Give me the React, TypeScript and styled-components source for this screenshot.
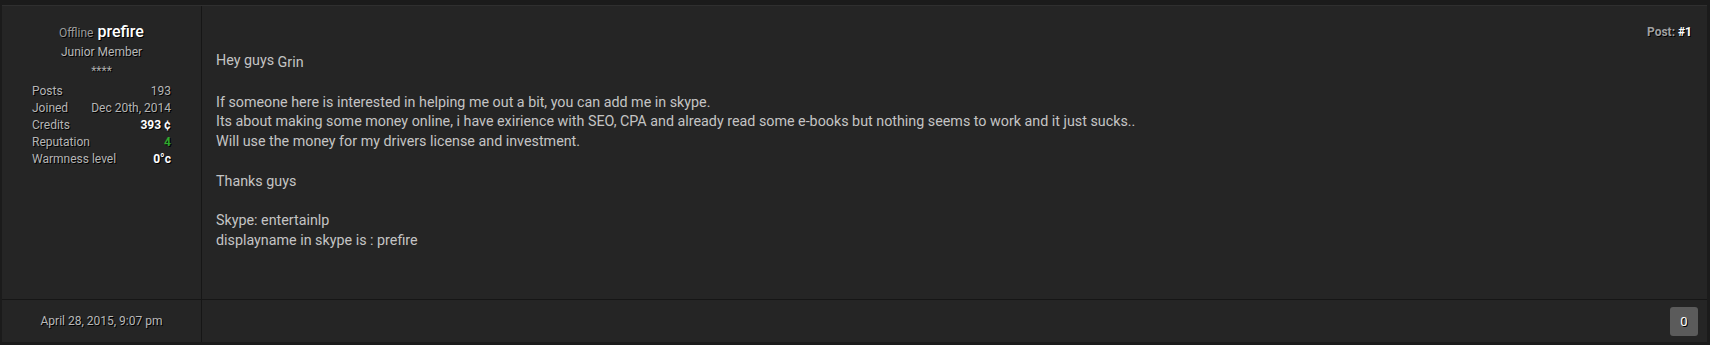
import React from "react";
import styled, { createGlobalStyle } from "styled-components";

const Global = createGlobalStyle`
  html, body { margin: 0; padding: 0; background: #1b1b1b; }
  body { font-family: Roboto, "Liberation Sans", Arial, sans-serif; }
`;

const Page = styled.div`
  padding: 5px 3px 2px 2px;
`;

const Post = styled.div`
  display: grid;
  grid-template-columns: 200px 1fr;
  grid-template-rows: 294px 42px;
  background: #252525;
  border-top: 1px solid #2f2f2f;
  box-sizing: border-box;
`;

const Sidebar = styled.div`
  border-right: 1px solid #161616;
  border-bottom: 1px solid #161616;
  padding: 16px 30px 0 30px;
  text-align: center;
  color: #b8b8b8;
  text-shadow: 1px 1px 0 #000;
`;

const NameLine = styled.div`
  line-height: 20px;
`;

const Status = styled.span`
  font-size: 12px;
  color: #9a9a9a;
`;

const Username = styled.span`
  font-size: 16px;
  font-weight: 500;
  color: #ffffff;
`;

const Rank = styled.div`
  font-size: 12px;
  line-height: 16px;
  margin-top: 1px;
`;

const Stars = styled.div`
  font-size: 12px;
  line-height: 16px;
  margin-top: 3px;
  color: #aaa;
`;

const Stats = styled.div`
  margin-top: 4px;
  display: flex;
  flex-direction: column;
`;

const StatRow = styled.div`
  display: flex;
  justify-content: space-between;
  font-size: 12px;
  line-height: 17px;
`;

const StatLabel = styled.span`
  color: #b5b5b5;
`;

const StatValue = styled.span<{ $tone?: "white" | "green" }>`
  color: ${(p) => (p.$tone === "white" ? "#ffffff" : p.$tone === "green" ? "#2fa82f" : "#b5b5b5")};
  font-weight: ${(p) => (p.$tone ? 700 : 400)};
`;

const Content = styled.div`
  border-bottom: 1px solid #161616;
  padding: 18px 15px 0 14px;
  display: flex;
  flex-direction: column;
`;

const PostNum = styled.div`
  align-self: flex-end;
  font-size: 12px;
  font-weight: 700;
  color: #a0a0a0;
  text-shadow: 1px 1px 0 #000;
  line-height: 16px;
`;

const Hash = styled.span`
  color: #ffffff;
`;

const Body = styled.div`
  margin-top: 11px;
  font-size: 14.3px;
  line-height: 19.75px;
  color: #c4c4c4;
`;

const Smiley = styled.span`
  display: inline-block;
  vertical-align: -2px;
`;

const FooterLeft = styled.div`
  border-right: 1px solid #161616;
  display: flex;
  align-items: center;
  justify-content: center;
  font-size: 12px;
  color: #b8b8b8;
  text-shadow: 1px 1px 0 #000;
`;

const FooterRight = styled.div`
  display: flex;
  align-items: center;
  justify-content: flex-end;
  padding-right: 9px;
`;

const Counter = styled.div`
  width: 28px;
  height: 29px;
  border-radius: 3px;
  background: #5b5b5b;
  color: #ffffff;
  font-size: 13px;
  display: flex;
  align-items: center;
  justify-content: center;
  text-shadow: 1px 1px 0 #000;
`;

const stats: { label: string; value: string; tone?: "white" | "green" }[] = [
  { label: "Posts", value: "193" },
  { label: "Joined", value: "Dec 20th, 2014" },
  { label: "Credits", value: "393 ¢", tone: "white" },
  { label: "Reputation", value: "4", tone: "green" },
  { label: "Warmness level", value: "0°c", tone: "white" },
];

export default function App() {
  return (
    <>
      <Global />
      <Page>
        <Post>
          <Sidebar>
            <NameLine>
              <Status>Offline</Status> <Username>prefire</Username>
            </NameLine>
            <Rank>Junior Member</Rank>
            <Stars>****</Stars>
            <Stats>
              {stats.map((s) => (
                <StatRow key={s.label}>
                  <StatLabel>{s.label}</StatLabel>
                  <StatValue $tone={s.tone}>{s.value}</StatValue>
                </StatRow>
              ))}
            </Stats>
          </Sidebar>
          <Content>
            <PostNum>
              Post: <Hash>#1</Hash>
            </PostNum>
            <Body>
              Hey guys <Smiley>Grin</Smiley>
              <br />
              <br />
              If someone here is interested in helping me out a bit, you can add me in skype.
              <br />
              Its about making some money online, i have exirience with SEO, CPA and already read some e-books but nothing seems to work and it just sucks..
              <br />
              Will use the money for my drivers license and investment.
              <br />
              <br />
              Thanks guys
              <br />
              <br />
              Skype: entertainlp
              <br />
              displayname in skype is : prefire
            </Body>
          </Content>
          <FooterLeft>April 28, 2015, 9:07 pm</FooterLeft>
          <FooterRight>
            <Counter>0</Counter>
          </FooterRight>
        </Post>
      </Page>
    </>
  );
}
